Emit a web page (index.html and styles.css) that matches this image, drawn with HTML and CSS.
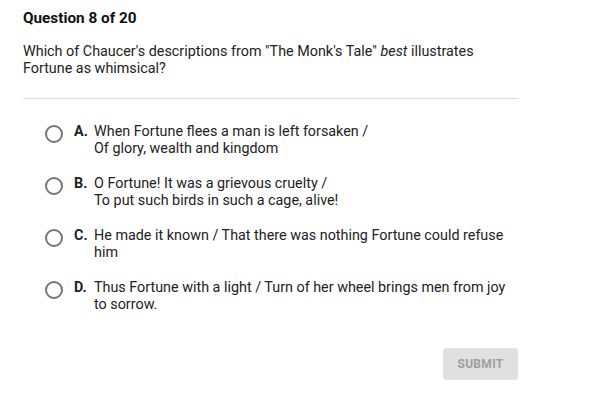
FILE: index.html
```html
<!DOCTYPE html>
<html>
<head>
<meta charset="utf-8">
<link rel="stylesheet" href="styles.css">
</head>
<body>
<div class="quiz">
  <h1 class="title">Question 8 of 20</h1>
  <p class="prompt">Which of Chaucer's descriptions from "The Monk's Tale" <em>best</em> illustrates Fortune as whimsical?</p>
  <hr class="divider">
  <ul class="options">
    <li class="option"><span class="radio"></span><span class="letter">A.</span><span class="text">When Fortune flees a man is left forsaken /<br>Of glory, wealth and kingdom</span></li>
    <li class="option"><span class="radio"></span><span class="letter">B.</span><span class="text">O Fortune! It was a grievous cruelty /<br>To put such birds in such a cage, alive!</span></li>
    <li class="option"><span class="radio"></span><span class="letter">C.</span><span class="text">He made it known / That there was nothing Fortune could refuse him</span></li>
    <li class="option"><span class="radio"></span><span class="letter">D.</span><span class="text">Thus Fortune with a light / Turn of her wheel brings men from joy to sorrow.</span></li>
  </ul>
  <div class="actions"><button class="submit">SUBMIT</button></div>
</div>
</body>
</html>
```
FILE: styles.css
```css
html, body {
  margin: 0;
  padding: 0;
  background: #fff;
}
body {
  font-family: Roboto, "Liberation Sans", sans-serif;
  color: #212121;
}
.quiz {
  width: 495px;
  padding: 9px 0 0 23px;
}
.title {
  margin: 0;
  font-size: 15.3px;
  font-weight: 700;
  line-height: 18px;
  color: #111;
}
.prompt {
  margin: 16px 0 0 0;
  font-size: 14.35px;
  line-height: 17px;
  color: #222;
}
.divider {
  margin: 21px 0 0 0;
  border: 0;
  border-top: 1px solid #dcdcdc;
  height: 0;
}
.options {
  list-style: none;
  margin: 0;
  padding: 24px 0 0 0;
}
.option {
  display: flex;
  align-items: flex-start;
  font-size: 14.35px;
  line-height: 17px;
  margin-bottom: 18px;
}
.radio {
  flex: none;
  box-sizing: border-box;
  width: 18px;
  height: 18px;
  border: 2px solid #757575;
  border-radius: 50%;
  margin: 2px 11px 0 45px;
}
.letter {
  flex: none;
  font-weight: 700;
  width: 20px;
  color: #222;
}
.text {
  flex: 1;
  color: #222;
}
.options {
  margin-left: -23px;
}
.actions {
  display: flex;
  justify-content: flex-end;
  padding-top: 17px;
}
.submit {
  font-family: Roboto, "Liberation Sans", sans-serif;
  font-size: 12px;
  font-weight: 700;
  color: #9e9e9e;
  background: #e0e0e0;
  border: 0;
  border-radius: 3px;
  width: 75px;
  height: 32px;
  letter-spacing: 0.3px;
}
```
